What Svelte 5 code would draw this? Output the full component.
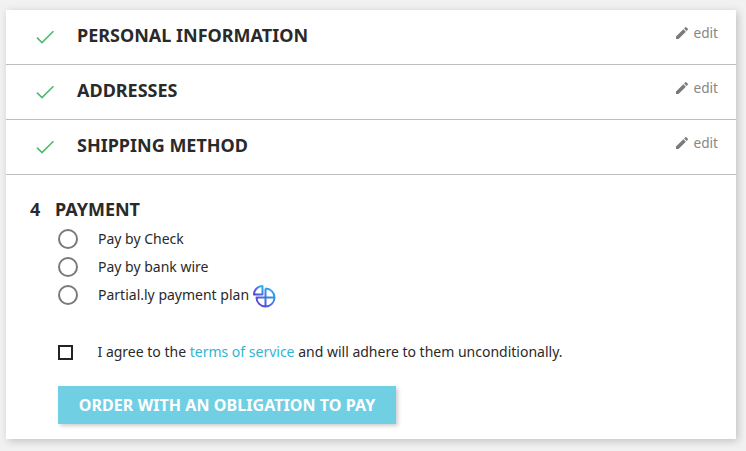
<script>
  const done = ['PERSONAL INFORMATION', 'ADDRESSES', 'SHIPPING METHOD'];
  const options = ['Pay by Check', 'Pay by bank wire', 'Partial.ly payment plan'];
</script>

<div class="page">
  <main class="card">
    {#each done as title}
      <section class="step">
        <svg class="check" viewBox="0 0 18 14" width="18" height="14" aria-hidden="true">
          <path d="M1 7.6 L6 12.6 L17.4 1.2" fill="none" stroke="#4cbb6c" stroke-width="1.6" />
        </svg>
        <h2>{title}</h2>
        <span class="edit">
          <svg viewBox="0 0 24 24" width="16" height="16" aria-hidden="true">
            <path fill="#7a7a7a" d="M3 17.25V21h3.75L17.81 9.94l-3.75-3.75L3 17.25zM20.71 7.04a1 1 0 0 0 0-1.41l-2.34-2.34a1 1 0 0 0-1.41 0l-1.83 1.83 3.75 3.75 1.83-1.83z" />
          </svg>
          edit
        </span>
      </section>
    {/each}
    <section class="payment">
      <h2 class="pay-title"><span class="num">4</span>PAYMENT</h2>
      <ul class="options">
        {#each options as option, i}
          <li>
            <span class="radio"></span>
            <span class="label">{option}</span>
            {#if i === 2}
              <svg class="logo" viewBox="0 0 24 24" width="24" height="24" aria-hidden="true">
                <defs>
                  <linearGradient id="lg" x1="0" y1="1" x2="1" y2="0">
                    <stop offset="0" stop-color="#6136d6" />
                    <stop offset="1" stop-color="#25b6ec" />
                  </linearGradient>
                </defs>
                <g fill="none" stroke="url(#lg)" stroke-width="2" stroke-linejoin="round">
                  <path d="M10.5 2 V10.5 H2 C2 5.8 5.8 2 10.5 2 Z" />
                  <path d="M13.5 4.5 A9 9 0 1 1 4.5 13.5 H22.5 M13.5 4.5 V22.5" />
                </g>
              </svg>
            {/if}
          </li>
        {/each}
      </ul>
      <div class="terms">
        <span class="box"></span>
        <span class="terms-text">I agree to the <a href="#terms">terms of service</a> and will adhere to them unconditionally.</span>
      </div>
      <button type="button">ORDER WITH AN OBLIGATION TO PAY</button>
    </section>
  </main>
</div>

<style>
  :global(body) {
    margin: 0;
    background: #f1f1f1;
  }
  .page {
    width: 746px;
    height: 451px;
    padding: 10px 10px 12px 6px;
    box-sizing: border-box;
    font-family: "Noto Sans", sans-serif;
    color: #2a2a2a;
    overflow: hidden;
  }
  .card {
    background: #fff;
    height: 429px;
    box-shadow: 2px 2px 8px rgba(0, 0, 0, 0.2);
  }
  .step {
    height: 55px;
    box-sizing: border-box;
    border-bottom: 1px solid #bdbdbd;
    display: flex;
    align-items: center;
    padding: 0 18px 4px 30px;
  }
  .check { margin-top: 4px; margin-right: 23px; }
  h2 {
    margin: 0;
    font-size: 18px;
    font-weight: 700;
    line-height: 24px;
    flex: 1;
  }
  .edit {
    align-self: flex-start;
    margin-top: 14px;
    font-size: 13.6px;
    line-height: 18px;
    color: #868686;
    display: flex;
    align-items: center;
    gap: 4px;
  }
  .payment { padding: 22px 0 0 24px; }
  .pay-title { display: flex; }
  .num { width: 25px; }
  .options {
    list-style: none;
    margin: 4px 0 0;
    padding: 0 0 0 28px;
  }
  .options li {
    display: flex;
    align-items: center;
    height: 28px;
    font-size: 14px;
  }
  .label { margin-top: -2px; }
  .radio {
    width: 16px;
    height: 16px;
    border: 2px solid #7a7a7a;
    border-radius: 50%;
    margin-right: 20px;
  }
  .logo { margin-left: 3px; margin-top: 2px; }
  .terms {
    display: flex;
    align-items: center;
    margin: 33px 0 0 28px;
    font-size: 14px;
    line-height: 20px;
  }
  .box {
    width: 11px;
    height: 11px;
    border: 2px solid #232323;
    margin-right: 24.5px;
  }
  a { color: #2fb5d2; text-decoration: none; }
  button {
    display: block;
    margin: 24px 0 0 28px;
    width: 338px;
    height: 38px;
    background: #71cfe3;
    border: 0;
    color: #fff;
    font: 700 16px/20px "Noto Sans", sans-serif;
    letter-spacing: 0.07px;
    box-shadow: 2px 2px 4px rgba(0, 0, 0, 0.2);
    padding: 0;
  }
</style>
